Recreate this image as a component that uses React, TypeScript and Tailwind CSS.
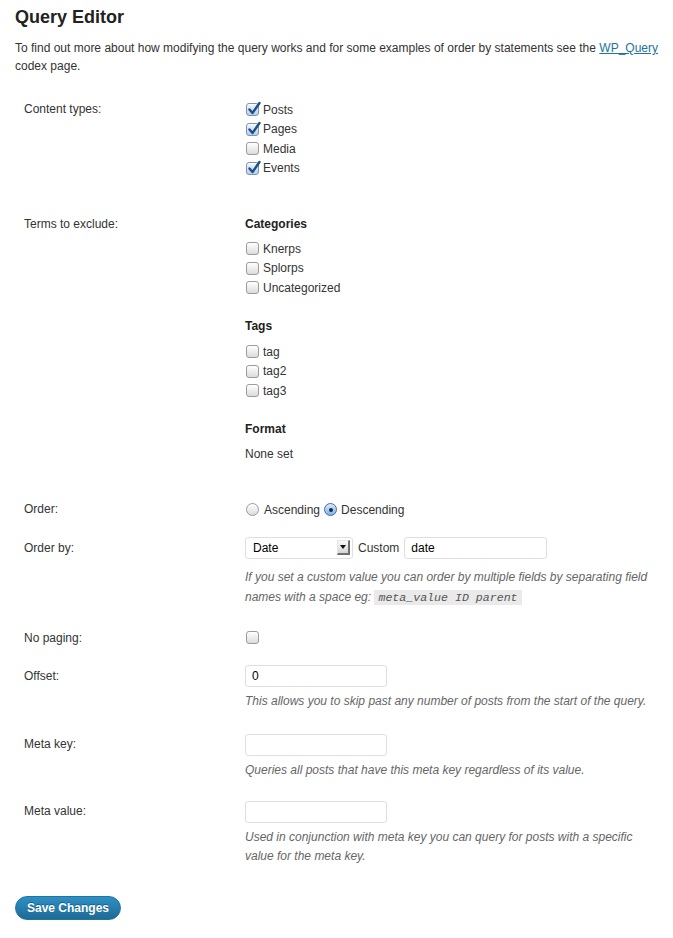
import React from "react";

const Check = ({ checked }: { checked?: boolean }) => (
  <span
    className={
      "relative inline-block w-[13px] h-[13px] shrink-0 rounded-[3px] border shadow-[inset_0_1px_0_#fff] " +
      (checked
        ? "border-[#7f93ab] bg-gradient-to-b from-[#f3f8fe] to-[#b4d0f0]"
        : "border-[#9b9b9b] bg-gradient-to-b from-white to-[#dcdcdc]")
    }
  >
    {checked && (
      <svg className="absolute left-[0px] top-[-3px]" width="14" height="15" viewBox="0 0 14 15">
        <path d="M2.5 8.5 L5.5 12 L12.5 2" fill="none" stroke="#1f4f8a" strokeWidth="2.4" strokeLinecap="round" strokeLinejoin="round" />
      </svg>
    )}
  </span>
);

const Radio = ({ checked }: { checked?: boolean }) => (
  <span
    className={
      "relative inline-flex items-center justify-center w-[13px] h-[13px] shrink-0 rounded-full border " +
      (checked
        ? "border-[#3a6fa6] bg-gradient-to-b from-[#dbeafc] to-[#7fb2ea]"
        : "border-[#9b9b9b] bg-gradient-to-b from-white to-[#dcdcdc]")
    }
  >
    {checked && <span className="w-[4px] h-[4px] rounded-full bg-[#1c2b3a]" />}
  </span>
);

const CheckItem = ({ label, checked }: { label: string; checked?: boolean }) => (
  <div className="flex items-center h-[19.5px]">
    <span className="ml-[1px] mr-[4px] flex"><Check checked={checked} /></span>
    <span>{label}</span>
  </div>
);

const Row = ({ label, children, className, labelClass }: { label: string; children: React.ReactNode; className?: string; labelClass?: string }) => (
  <div className={"grid grid-cols-[230px_1fr] " + (className || "")}>
    <div className={"pl-[9px] " + (labelClass || "leading-[19.5px]")}>{label}</div>
    <div>{children}</div>
  </div>
);

const Input = ({ value, className }: { value?: string; className?: string }) => (
  <div className={"h-[22px] border border-[#dfdfdf] rounded-[3px] bg-white flex items-center px-[6px] text-black " + (className || "")}>
    {value}
  </div>
);

export default function App() {
  return (
    <div className="min-h-[938px] bg-white text-[#333] text-[12px] px-[15px] pt-[5px]" style={{ fontFamily: '"Liberation Sans", Arial, sans-serif' }}>
      <h2 className="text-[18px] font-bold leading-[24px] text-[#222]">Query Editor</h2>
      <p className="mt-[10px] leading-[18px] text-[#333] mr-[-12px]">
        To find out more about how modifying the query works and for some examples of order by statements see the{" "}
        <a className="text-[#21759b] underline">WP_Query</a> codex page.
      </p>

      <Row label="Content types:" className="mt-[25px]">
        <CheckItem label="Posts" checked />
        <CheckItem label="Pages" checked />
        <CheckItem label="Media" />
        <CheckItem label="Events" checked />
      </Row>

      <Row label="Terms to exclude:" className="mt-[37px]">
        <div className="font-bold leading-[19.5px] text-[#222]">Categories</div>
        <div className="mt-[4.5px]">
          <CheckItem label="Knerps" />
          <CheckItem label="Splorps" />
          <CheckItem label="Uncategorized" />
        </div>
        <div className="mt-[19.5px] font-bold leading-[19.5px] text-[#222]">Tags</div>
        <div className="mt-[5.5px]">
          <CheckItem label="tag" />
          <CheckItem label="tag2" />
          <CheckItem label="tag3" />
        </div>
        <div className="mt-[19.5px] font-bold leading-[19.5px] text-[#222]">Format</div>
        <div className="mt-[5.5px] leading-[19.5px]">None set</div>
      </Row>

      <Row label="Order:" className="mt-[35.5px]">
        <div className="flex items-center h-[19.5px]">
          <span className="ml-[1px] mr-[5px] flex"><Radio /></span>
          <span className="mr-[4px]">Ascending</span>
          <span className="mr-[4px] flex"><Radio checked /></span>
          <span>Descending</span>
        </div>
      </Row>

      <Row label="Order by:" className="mt-[17px]" labelClass="leading-[22px]">
        <div className="flex items-center">
          <div className="w-[108px] h-[22px] border border-[#dfdfdf] rounded-[3px] bg-white flex items-center pl-[7px] pr-[2px] text-black">
            <span className="flex-1">Date</span>
            <span className="relative w-[13px] h-[15px] bg-gradient-to-b from-[#fafafa] to-[#d6d6d6] border-r-2 border-b-2 border-[#6f6f6f] border-l border-t border-l-[#e5e5e5] border-t-[#e5e5e5] flex items-center justify-center">
              <svg width="6" height="4" viewBox="0 0 6 4"><path d="M0 0 H6 L3 4 Z" fill="#111" /></svg>
            </span>
          </div>
          <span className="ml-[5px] mr-[5px]">Custom</span>
          <Input value="date" className="w-[143px]" />
        </div>
        <div className="mt-[8px] leading-[20px] italic text-[#666]">
          If you set a custom value you can order by multiple fields by separating field names with a space eg:{" "}
          <code className="bg-[#eaeaea] px-[4px] py-[1px] text-[11.6px] italic text-[#555]" style={{ fontFamily: '"Liberation Mono", monospace' }}>meta_value ID parent</code>
        </div>
      </Row>

      <Row label="No paging:" className="mt-[20px]" labelClass="leading-[20px]">
        <div className="flex items-center h-[20px]">
          <span className="ml-[1px] flex"><Check /></span>
        </div>
      </Row>

      <Row label="Offset:" className="mt-[17px]" labelClass="leading-[22px]">
        <Input value="0" className="w-[142px]" />
        <div className="mt-[4px] leading-[20px] italic text-[#666]">This allows you to skip past any number of posts from the start of the query.</div>
      </Row>

      <Row label="Meta key:" className="mt-[23px]" labelClass="leading-[20px]">
        <Input className="w-[142px]" />
        <div className="mt-[4px] leading-[20px] italic text-[#666]">Queries all posts that have this meta key regardless of its value.</div>
      </Row>

      <Row label="Meta value:" className="mt-[21px]" labelClass="leading-[20px]">
        <Input className="w-[142px]" />
        <div className="mt-[5px] leading-[19.5px] italic text-[#666] pr-[10px]">Used in conjunction with meta key you can query for posts with a specific value for the meta key.</div>
      </Row>

      <button className="mt-[29px] h-[24px] w-[106px] rounded-full bg-gradient-to-b from-[#2e8fc6] to-[#1e6a97] border border-[#21759b] text-white font-bold text-[12px] [text-shadow:0_-1px_0_rgba(0,0,0,0.3)]">
        Save Changes
      </button>
    </div>
  );
}
